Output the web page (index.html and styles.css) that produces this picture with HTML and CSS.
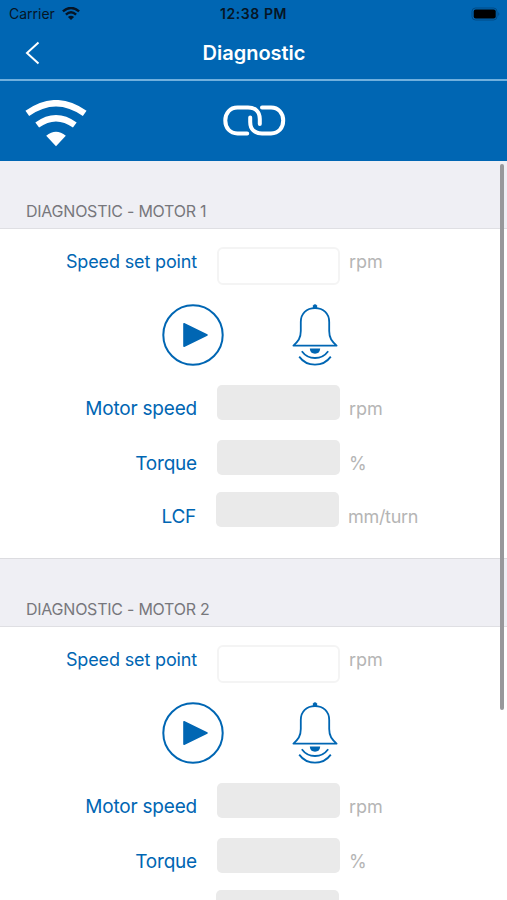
FILE: index.html
```
<!DOCTYPE html>
<html lang="en">
<head>
    <meta charset="UTF-8">
    <meta name="viewport" content="width=device-width, initial-scale=1.0">
    <title>Diagnostic</title>
    <link rel="stylesheet" href="styles.css">
</head>
<body>
    <svg class="symbols" width="0" height="0">
        <symbol id="play" viewBox="0 0 62 62">
            <circle cx="31" cy="31" r="29.7" fill="none" stroke="#0066b3" stroke-width="2"/>
            <path d="M22 19.8 L45 31 L22 42.2 Z" fill="#0066b3" stroke="#0066b3" stroke-width="1.6" stroke-linejoin="round"/>
        </symbol>
        <symbol id="bell" viewBox="0 0 46 62">
            <path d="M20.6 4.5 L21 1.6 Q23 -1 25 1.6 L25.4 4.5 Z" fill="#0066b3"/>
            <path d="M1.4 41.6 C6 37.5 8.8 34.5 8.8 27 V18 C8.8 9.5 14.5 4.2 23 4.2 S37.2 9.5 37.2 18 V27 C37.2 34.5 40 37.5 44.6 41.6 Z" fill="none" stroke="#0066b3" stroke-width="1.8" stroke-linejoin="round"/>
            <path d="M17.8 44.6 H28.2 C28 48 26.2 49.8 23 49.8 S18 48 17.8 44.6 Z" fill="#0066b3"/>
            <path d="M9.8 47.2 Q14.8 54 23 54 T36.2 47.2 M7.2 52.6 Q13 60.6 23 60.6 T38.8 52.6" fill="none" stroke="#0066b3" stroke-width="1.8"/>
        </symbol>
    </svg>

    <div class="top">
        <div class="status">
            <div class="carrier">
                <span>Carrier</span>
                <svg width="18" height="14" viewBox="0 0 18 14">
                    <path d="M0.9 4.4 Q9 -2.4 17.1 4.4 M3.9 7.6 Q9 3 14.1 7.6" fill="none" stroke="#061525" stroke-width="2.5"/>
                    <path d="M9 13 L5.9 10 Q9 7.4 12.1 10 Z" fill="#061525"/>
                </svg>
            </div>
            <div class="clock">12:38 PM</div>
            <div class="battery">
                <svg width="30" height="14" viewBox="0 0 30 14">
                    <rect x="1" y="1" width="25" height="12" rx="3.5" fill="none" stroke="#004b86" stroke-width="1"/>
                    <rect x="2.7" y="2.6" width="22" height="9" rx="2" fill="#000"/>
                    <path d="M27.3 5 Q29.3 7 27.3 9 Z" fill="#004b86"/>
                </svg>
            </div>
        </div>
        <div class="nav">
            <svg class="back" width="16" height="24" viewBox="0 0 16 24">
                <path d="M13.5 1.5 L2 12 L13.5 22.5" fill="none" stroke="#fff" stroke-width="2"/>
            </svg>
            <h1>Diagnostic</h1>
        </div>
        <div class="toolbar">
            <svg class="wifi" width="62" height="48" viewBox="0 0 62 48">
                <path d="M2.3 13.4 Q31 -7 59.7 13.4 M12.2 25 Q31 11.4 49.8 25" fill="none" stroke="#fff" stroke-width="6.4"/>
                <path d="M31 46.2 L21.2 35.8 Q31 27.6 40.8 35.8 Z" fill="#fff"/>
            </svg>
            <svg class="link" width="64" height="32" viewBox="0 0 64 32">
                <path d="M25.2 28.4 H15.5 C8 28.4 3.3 23 3.3 15.5 S8 2.6 15.5 2.6 H26 C33.5 2.6 37.8 7 37.8 14 V19 M40 2.6 H49 C56.5 2.6 61.2 8 61.2 15.5 S56.5 28.4 49 28.4 H40 C32.5 28.4 28.2 24 28.2 17 V12.5" fill="none" stroke="#fff" stroke-width="4" stroke-linecap="round"/>
            </svg>
        </div>
    </div>

    <div class="content">
        <h2>DIAGNOSTIC - MOTOR 1</h2>
        <div class="motor">
            <div class="row setpoint">
                <label>Speed set point</label>
                <input type="text">
                <span class="unit">rpm</span>
            </div>
            <div class="actions">
                <svg width="62" height="62"><use href="#play"/></svg>
                <svg width="46" height="62"><use href="#bell"/></svg>
            </div>
            <div class="row">
                <label>Motor speed</label>
                <div class="value"></div>
                <span class="unit">rpm</span>
            </div>
            <div class="row torque">
                <label>Torque</label>
                <div class="value"></div>
                <span class="unit">%</span>
            </div>
            <div class="row lcf">
                <label>LCF</label>
                <div class="value"></div>
                <span class="unit">mm/turn</span>
            </div>
        </div>

        <h2>DIAGNOSTIC - MOTOR 2</h2>
        <div class="motor">
            <div class="row setpoint">
                <label>Speed set point</label>
                <input type="text">
                <span class="unit">rpm</span>
            </div>
            <div class="actions">
                <svg width="62" height="62"><use href="#play"/></svg>
                <svg width="46" height="62"><use href="#bell"/></svg>
            </div>
            <div class="row">
                <label>Motor speed</label>
                <div class="value"></div>
                <span class="unit">rpm</span>
            </div>
            <div class="row torque">
                <label>Torque</label>
                <div class="value"></div>
                <span class="unit">%</span>
            </div>
            <div class="row lcf">
                <div class="value"></div>
            </div>
        </div>
        <div class="scrollbar"></div>
    </div>
</body>
</html>
```

FILE: styles.css
```
* {
    box-sizing: border-box;
}

body {
    margin: 0;
    height: 900px;
    display: flex;
    flex-direction: column;
    overflow: hidden;
    background-color: #fff;
    font-family: Inter, "Liberation Sans", sans-serif;
}

svg {
    display: block;
    flex: none;
}

.symbols {
    position: absolute;
}

.top {
    flex: none;
    background-color: #0066b3;
}

/* Status bar */
.status {
    display: grid;
    grid-template-columns: 1fr auto 1fr;
    align-items: center;
    height: 27px;
    padding: 0 6px;
    color: #061525;
    font-size: 14px;
}

.carrier {
    display: flex;
    align-items: center;
    gap: 7px;
    padding-left: 3px;
}

.clock {
    font-weight: 600;
    letter-spacing: 0.6px;
}

.battery {
    justify-self: end;
}

/* Title bar */
.nav {
    display: grid;
    grid-template-columns: 41px 1fr 40px;
    align-items: center;
    height: 54px;
    padding-bottom: 1px;
    border-bottom: 2px solid #70b0de;
}

.back {
    justify-self: end;
}

h1 {
    margin: 0;
    color: #fff;
    font-size: 20px;
    font-weight: 600;
    text-align: center;
}

.toolbar {
    display: grid;
    grid-template-columns: 1fr 64px 1fr;
    align-items: center;
    height: 80px;
    padding: 0 25px;
}

.wifi {
    margin-top: 5px;
}

/* Motor sections */
.content {
    position: relative;
    flex: 1;
    overflow: hidden;
}

h2 {
    height: 68px;
    margin: 0;
    padding: 40px 26px 0;
    background-color: #efeff4;
    border-bottom: 1px solid #dfdfe3;
    color: #77777c;
    font-size: 16px;
    font-weight: 400;
    line-height: 20px;
    letter-spacing: -0.24px;
}

.motor {
    height: 330px;
    padding-top: 18px;
    border-bottom: 1px solid #dcdce0;
}

.row {
    display: grid;
    grid-template-columns: 197px 123px 1fr;
    align-items: start;
    column-gap: 20px;
    height: 55px;
}

label,
.unit {
    padding-top: 12px;
    font-size: 19px;
    line-height: 24px;
}

label {
    color: #0066b3;
    letter-spacing: -0.2px;
    text-align: right;
}

.unit {
    margin-left: -11px;
    color: #b5b5b5;
    font-size: 18px;
}

.setpoint {
    height: 57px;
}

.setpoint label,
.setpoint .unit {
    padding-top: 3px;
}

.setpoint label {
    font-size: 18px;
    letter-spacing: -0.15px;
}

input {
    width: 123px;
    height: 38px;
    border: 2px solid #f4f4f4;
    border-radius: 6px;
    background-color: #fff;
}

.value {
    grid-column: 2;
    height: 35px;
    border-radius: 5px;
    background-color: #eaeaea;
}

.torque {
    height: 52px;
}

.lcf {
    margin-left: -1px;
}

.lcf label,
.lcf .unit {
    padding-top: 13px;
    letter-spacing: -0.3px;
}

.actions {
    display: flex;
    gap: 68px;
    height: 81px;
    padding-left: 162px;
}

.scrollbar {
    position: absolute;
    top: 3px;
    right: 3px;
    width: 4px;
    height: 546px;
    border-radius: 2px;
    background-color: #98989b;
}
```
